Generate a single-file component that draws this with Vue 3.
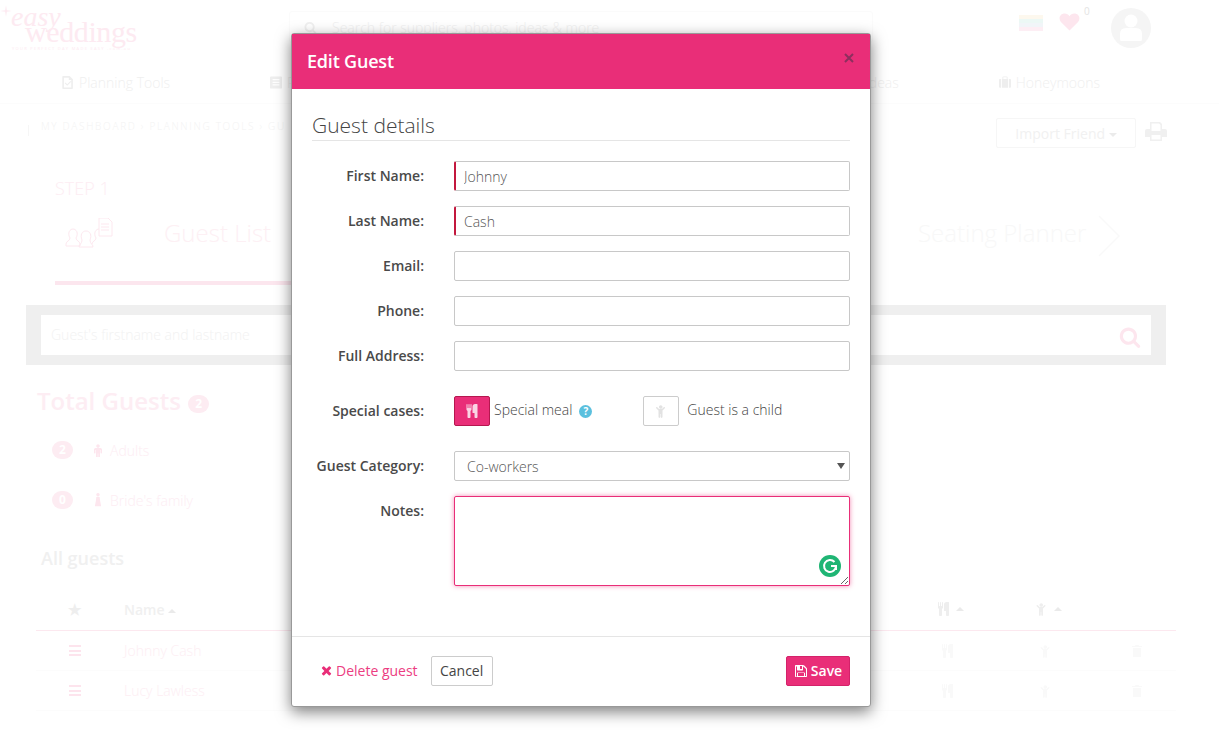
<script setup>
const d = {
  cutlery: 'M640 64v640q0 61-35.5 111t-92.5 70v779q0 52-38 90t-90 38h-128q-52 0-90-38t-38-90v-779q-57-20-92.5-70t-35.5-111v-640q0-26 19-45t45-19 45 19 19 45v416q0 26 19 45t45 19 45-19 19-45v-416q0-26 19-45t45-19 45 19 19 45v416q0 26 19 45t45 19 45-19 19-45v-416q0-26 19-45t45-19 45 19 19 45zm768 0v1600q0 52-38 90t-90 38h-128q-52 0-90-38t-38-90v-512h-224q-13 0-22.5-9.5t-9.5-22.5v-800q0-132 94-226t226-94h256q26 0 45 19t19 45z',
  child: 'M1188 548l-292 292v824q0 46-33 79t-79 33-79-33-33-79v-384h-64v384q0 46-33 79t-79 33-79-33-33-79v-824l-292-292q-28-28-28-68t28-68q29-28 68.5-28t67.5 28l228 228h368l228-228q28-28 68-28t68 28q28 29 28 68.5t-28 67.5zm-292-164q0 93-65.5 158.5t-158.5 65.5-158.5-65.5-65.5-158.5 65.5-158.5 158.5-65.5 158.5 65.5 65.5 158.5z',
  male: 'M1024 832v416q0 40-28 68t-68 28-68-28-28-68v-352h-64v912q0 46-33 79t-79 33-79-33-33-79v-464h-64v464q0 46-33 79t-79 33-79-33-33-79v-912h-64v352q0 40-28 68t-68 28-68-28-28-68v-416q0-80 56-136t136-56h640q80 0 136 56t56 136zm-288-448q0 93-65.5 158.5t-158.5 65.5-158.5-65.5-65.5-158.5 65.5-158.5 158.5-65.5 158.5 65.5 65.5 158.5z',
  times: 'M1298 1242q0 40-28 68l-136 136q-28 28-68 28t-68-28l-294-294-294 294q-28 28-68 28t-68-28l-136-136q-28-28-28-68t28-68l294-294-294-294q-28-28-28-68t28-68l136-136q28-28 68-28t68 28l294 294 294-294q28-28 68-28t68 28l136 136q28 28 28 68t-28 68l-294 294 294 294q28 28 28 68z',
  save: 'M512 1536h768v-384h-768v384zm896 0h128v-840q0-14-10-38.5t-20-34.5l-281-281q-10-10-34-20t-39-10v416q0 40-28 68t-68 28h-576q-40 0-68-28t-28-68v-416h-128v1280h128v-416q0-40 28-68t68-28h832q40 0 68 28t28 68v416zm-384-928v-320q0-13-9.5-22.5t-22.5-9.5h-192q-13 0-22.5 9.5t-9.5 22.5v320q0 13 9.5 22.5t22.5 9.5h192q13 0 22.5-9.5t9.5-22.5zm640 32v928q0 40-28 68t-68 28h-1344q-40 0-68-28t-28-68v-1344q0-40 28-68t68-28h928q40 0 88 20t76 48l280 280q28 28 48 76t20 88z',
  search: 'M1216 832q0-185-131.5-316.5t-316.5-131.5-316.5 131.5-131.5 316.5 131.5 316.5 316.5 131.5 316.5-131.5 131.5-316.5zm512 832q0 52-38 90t-90 38q-54 0-90-38l-343-342q-179 124-399 124-143 0-273.5-55.5t-225-150-150-225-55.5-273.5 55.5-273.5 150-225 225-150 273.5-55.5 273.5 55.5 225 150 150 225 55.5 273.5q0 220-124 399l343 343q37 37 37 90z'
}
const fields = [
  { label: 'First Name:', value: 'Johnny', required: true },
  { label: 'Last Name:', value: 'Cash', required: true },
  { label: 'Email:', value: '' },
  { label: 'Phone:', value: '' },
  { label: 'Full Address:', value: '' }
]
const guests = ['Johnny Cash', 'Lucy Lawless']
</script>

<template>
  <div class="page">
    <header class="top">
      <div class="logo">
        <svg class="logo-star" viewBox="0 0 14 14"><path d="M7 0l1 6 6 1-6 1-1 6-1-6-6-1 6-1z" /></svg>
        <span class="logo-easy">easy</span>
        <span class="logo-wed">weddings</span>
        <span class="logo-tag">YOUR PERFECT DAY MADE EASY .com.au</span>
      </div>
      <div class="top-search">
        <svg class="top-search-icon" viewBox="0 0 1792 1792"><path :d="d.search" /></svg>
        <span>Search for suppliers, photos, ideas &amp; more</span>
      </div>
      <div class="flag"><i></i><i></i><i></i><i></i></div>
      <svg class="heart" viewBox="0 0 22 18"><path d="M11 18L2 9C-1 5 1 0 6 0c2 0 4 1 5 3 1-2 3-3 5-3 5 0 7 5 4 9z" /></svg>
      <span class="heart-count">0</span>
      <div class="avatar">
        <svg viewBox="0 0 40 40"><circle cx="20" cy="13" r="6.5" /><path d="M10 33q-1 0-1-2v-5q0-6 6-6h10q6 0 6 6v5q0 2-1 2z" /></svg>
      </div>
    </header>

    <nav class="nav">
      <span class="nav-item">
        <svg viewBox="0 0 14 16"><path d="M1 0h8l4 4v11a1 1 0 0 1-1 1H1a1 1 0 0 1-1-1V1a1 1 0 0 1 1-1zm1 2v12h9V5H8V2zm1 7l1-1 2 2 4-4 1 1-5 5z" /></svg>
        Planning Tools
      </span>
      <span class="nav-item nav-second">
        <svg viewBox="0 0 14 14"><path d="M1 0h12a1 1 0 0 1 1 1v12a1 1 0 0 1-1 1H1a1 1 0 0 1-1-1V1a1 1 0 0 1 1-1zm2 3v1.500h8V3zm0 3v1.500h8V6zm0 3v1.500h8V9z" /></svg>
        Planner
      </span>
      <span class="nav-ideas">Photos &amp; Ideas</span>
      <span class="nav-item nav-last">
        <svg viewBox="0 0 14 14"><path d="M5 0h4a1 1 0 0 1 1 1v2h3a1 1 0 0 1 1 1v8a1 1 0 0 1-1 1H1a1 1 0 0 1-1-1V4a1 1 0 0 1 1-1h3V1a1 1 0 0 1 1-1zm0 1v2h4V1zM2.500 3v10h1V3zm8 0v10h1V3z" /></svg>
        Honeymoons
      </span>
    </nav>

    <div class="crumbs">
      <span class="crumb-mark"></span>
      <span class="crumb-text">MY DASHBOARD › PLANNING TOOLS › GU</span>
      <button class="import">Import Friend <i class="caret"></i></button>
      <svg class="printer" viewBox="0 0 22 19"><path d="M5 0h10l2 2v5h3a2 2 0 0 1 2 2v6h-5v4H5v-4H0V9a2 2 0 0 1 2-2h3zm1.500 1.500V9h9V3l-1.500-1.500zm0 11.500v4.500h9V13z" /></svg>
    </div>

    <section class="steps">
      <div class="step-label">STEP 1</div>
      <div class="tab-row">
        <svg class="tab-icon" viewBox="0 0 48 30">
          <g fill="none" stroke="#fde8ef" stroke-width="1">
            <path d="M1 26c0-3 4-3 4-6-3-5 0-9 3-9s6 4 3 9c0 3 4 3 4 6v2H1z" />
            <path d="M14 29c0-3 3-3 3-7-2-5 0-9 4-9s6 4 4 9c0 4 3 4 3 7z" />
            <path d="M27 26c0-3 4-3 4-6-3-5 0-9 3-9" />
            <path d="M34 0h9l4 4v14H34zM36 6h8M36 9h8M36 12h8" />
          </g>
        </svg>
        <span class="tab-guest">Guest List</span>
        <span class="tab-seat">Seating Planner</span>
        <svg class="tab-chevron" viewBox="0 0 22 42"><path d="M1 1l20 20-20 20" /></svg>
      </div>
      <div class="tab-line"></div>
    </section>

    <div class="band">
      <div class="band-input">
        <span>Guest's firstname and lastname</span>
        <svg viewBox="0 0 1792 1792"><path :d="d.search" /></svg>
      </div>
    </div>

    <h2 class="total">Total Guests <span class="badge badge-big">2</span></h2>

    <div class="stats">
      <div class="stat-col">
        <div class="stat">
          <span class="badge">2</span>
          <svg class="stat-icon" viewBox="0 0 1024 1792"><path :d="d.male" /></svg>
          <span>Adults</span>
        </div>
        <div class="stat">
          <span class="badge">0</span>
          <svg class="stat-icon" viewBox="0 0 1024 1792"><path d="M512 0a220 220 0 1 1-1 0zM300 500h424l60 500 130 700H110l130-700z" /></svg>
          <span>Bride's family</span>
        </div>
      </div>
      <div class="stat-col">
        <div class="stat">
          <span class="badge">0</span>
          <svg class="stat-icon wide" viewBox="0 0 1408 1792"><path :d="d.cutlery" /></svg>
          <span>Special meals</span>
        </div>
        <div class="stat">
          <span class="badge">0</span>
          <svg class="stat-icon wide" viewBox="0 0 11 14"><path fill-rule="evenodd" d="M0 0h11v14H0zM2 2v1h1V2zm3 0v1h1V2zm3 0v1h1V2zM2 5v1h1V5zm3 0v1h1V5zm3 0v1h1V5zM2 8v1h1V8zm3 0v1h1V8zm3 0v1h1V8zM4 11v3h3v-3z" /></svg>
          <span>Co-workers</span>
        </div>
      </div>
    </div>

    <h3 class="all">All guests</h3>

    <div class="table">
      <div class="row head">
        <span class="cell-star">★</span>
        <span>Name <i class="sort"></i></span>
        <span class="head-ic"><svg class="ic" viewBox="0 0 1408 1792"><path :d="d.cutlery" /></svg><i class="sort"></i></span>
        <span class="head-ic"><svg class="ic" viewBox="0 0 1408 1792"><path :d="d.child" /></svg><i class="sort"></i></span>
        <span></span>
      </div>
      <div v-for="g in guests" :key="g" class="row body-row">
        <span class="burger"><i></i><i></i><i></i></span>
        <span class="guest-name">{{ g }}</span>
        <span class="row-ic"><svg class="ic" viewBox="0 0 1408 1792"><path :d="d.cutlery" /></svg></span>
        <span class="row-ic"><svg class="ic" viewBox="0 0 1408 1792"><path :d="d.child" /></svg></span>
        <svg class="trash" viewBox="0 0 10 12"><path d="M3.500 0h3l.5 1h3v1H0V1h3zM1 3h8v9H1z" /></svg>
      </div>
    </div>

    <div class="modal">
      <div class="modal-head">
        <span>Edit Guest</span>
        <svg class="close" viewBox="0 0 12 12"><path d="M2 2l8 8M10 2l-8 8" /></svg>
      </div>
      <div class="modal-body">
        <h4 class="section">Guest details</h4>
        <div class="fields">
          <label v-for="f in fields" :key="f.label" class="field">
            <span class="lbl">{{ f.label }}</span>
            <input class="txt" :class="{ req: f.required }" type="text" :value="f.value" />
          </label>
        </div>
        <div class="field cases">
          <span class="lbl">Special cases:</span>
          <div class="case-list">
            <span class="toggle on"><svg viewBox="0 0 1408 1792"><path :d="d.cutlery" /></svg></span>
            <span class="case-text">Special meal</span>
            <span class="help">?</span>
            <span class="toggle off"><svg viewBox="0 0 1408 1792"><path :d="d.child" /></svg></span>
            <span class="case-text">Guest is a child</span>
          </div>
        </div>
        <label class="field category">
          <span class="lbl">Guest Category:</span>
          <span class="select-wrap">
            <select class="sel"><option>Co-workers</option></select>
            <i class="sel-arrow"></i>
          </span>
        </label>
        <label class="field notes">
          <span class="lbl">Notes:</span>
          <span class="area-wrap">
            <textarea class="area"></textarea>
            <span class="grammarly">
              <svg viewBox="0 0 22 22"><path d="M15.500 7A6 6 0 1 0 17 11h-5" fill="none" stroke="#fff" stroke-width="2" /><path d="M13 11h4v4" fill="none" stroke="#fff" stroke-width="2" /></svg>
            </span>
          </span>
        </label>
      </div>
      <div class="modal-foot">
        <a class="delete"><svg viewBox="0 0 1408 1792"><path :d="d.times" /></svg>Delete guest</a>
        <button class="cancel">Cancel</button>
        <button class="save"><svg viewBox="0 0 1792 1792"><path :d="d.save" /></svg>Save</button>
      </div>
    </div>
  </div>
</template>

<style scoped>
.page {
  position: relative;
  width: 1219px;
  height: 734px;
  overflow: hidden;
  background: #fff;
  font-family: "Open Sans", "Liberation Sans", sans-serif;
  font-size: 14px;
  color: #555;
}

/* Top bar */
.top { position: relative; display: flex; align-items: flex-start; height: 66px; }
.logo { position: relative; width: 289px; height: 66px; font-family: "Liberation Serif", serif; color: #fdeaf1; flex: none; }
.logo-star { position: absolute; left: 0; top: 5px; width: 12px; height: 12px; fill: #fdeaf1; }
.logo-easy { position: absolute; left: 11px; top: 0; font-style: italic; font-size: 28px; line-height: 34px; }
.logo-wed { position: absolute; left: 25px; top: 14px; font-size: 30px; line-height: 36px; letter-spacing: -0.4px; }
.logo-tag { position: absolute; left: 12px; top: 46px; font: 4px/6px "Open Sans", sans-serif; letter-spacing: 1.3px; white-space: nowrap; }
.top-search {
  display: flex; align-items: center; gap: 15px; width: 584px; height: 32px; margin-top: 11px;
  padding-left: 14px; box-sizing: border-box; border: 1px solid #fbfbfb; border-radius: 3px; color: #f1f1f1; font-size: 14px; font-weight: 300; flex: none;
}
.top-search-icon { width: 13px; height: 13px; fill: #f0f0f0; }
.flag { display: flex; flex-direction: column; width: 24px; height: 16px; margin: 15px 0 0 146px; flex: none; }
.flag i { flex: 1; }
.flag i:nth-child(1) { background: #fdf8ee; }
.flag i:nth-child(2) { background: #ecf8f5; }
.flag i:nth-child(3) { background: #f1f5f8; }
.flag i:nth-child(4) { background: #fdeef4; }
.heart { width: 21px; height: 18px; margin: 13px 0 0 16px; fill: #fde6ee; flex: none; }
.heart-count { font-size: 10px; color: #e4e4e4; margin: 4px 0 0 4px; width: 27px; flex: none; line-height: 14px; }
.avatar { width: 40px; height: 40px; margin-top: 8px; border-radius: 50%; background: #f5f5f5; flex: none; }
.avatar svg { display: block; fill: #fff; }

/* Main nav */
.nav { display: flex; align-items: center; height: 33px; padding: 0 119px 4px 62px; border-bottom: 1px solid #fcfcfc; color: #efefef; font-weight: 300; }
.nav-item { display: flex; align-items: center; gap: 5px; }
.nav-item svg { width: 12px; height: 13px; fill: #eeeeee; }
.nav-second { margin-left: 100px; }
.nav-ideas { margin-left: auto; }
.nav-last { margin-left: 100px; }

/* Breadcrumb */
.crumbs { display: flex; align-items: flex-start; height: 67px; box-sizing: border-box; padding: 14px 52px 0 28px; }
.crumb-mark { width: 1px; height: 11px; margin-top: 7px; background: #f6f6f6; }
.crumb-text { margin-left: 12px; font-size: 10px; font-weight: 300; line-height: 14px; margin-top: 1px; letter-spacing: 1.7px; color: #f3f3f3; white-space: nowrap; }
.import {
  margin-left: auto; width: 140px; height: 30px; background: #fff; border: 1px solid #f6f6f6; border-radius: 2px;
  color: #f1f1f1; font: 14px "Open Sans", sans-serif; padding: 0;
}
.caret { display: inline-block; border: 4px solid transparent; border-top-color: #ebebeb; border-bottom: 0; vertical-align: 2px; }
.printer { width: 22px; height: 19px; margin: 4px 0 0 9px; fill: #f0f0f0; }

/* Steps */
.steps { padding: 0 0 0 55px; height: 134px; }
.step-label { height: 32px; padding-top: 6px; box-sizing: border-box; font-size: 18px; line-height: 22px; font-weight: 300; color: #fdedf3; }
.tab-row { position: relative; display: flex; align-items: center; height: 59px; }
.tab-icon { width: 48px; height: 30px; margin: 0 0 0 10px; flex: none; }
.tab-guest { margin-left: 51px; font-size: 24px; font-weight: 300; color: #fdf0f4; width: 754px; flex: none; }
.tab-seat { font-size: 24px; font-weight: 300; color: #f8f8f8; white-space: nowrap; }
.tab-chevron { width: 22px; height: 42px; margin: 6px 0 0 12px; fill: none; stroke: #f9f9f9; stroke-width: 1.5; flex: none; }
.tab-line { width: 240px; height: 4px; margin-top: 19px; background: #fce6ee; }

/* Search band */
.band { width: 1140px; height: 60px; margin-left: 26px; padding: 10px 15px; box-sizing: border-box; background: #efefef; }
.band-input { display: flex; align-items: center; justify-content: space-between; height: 40px; padding: 0 10px; background: #fff; color: #f2f2f2; font-weight: 300; }
.band-input span { margin-top: -2px; }
.band-input svg { width: 22px; height: 22px; margin-top: 4px; fill: #fde6ee; }

/* Totals */
.total { margin: 19px 0 0 37px; font-size: 24px; line-height: 33px; font-weight: 600; color: #fdedf3; }
.badge {
  display: inline-block; width: 21px; height: 18px; border-radius: 10px; background: #fdecf2; color: #fff;
  font-size: 12px; font-weight: 700; line-height: 18px; text-align: center; flex: none;
}
.badge-big { vertical-align: 2px; margin-left: 1px; }
.stats { display: flex; padding-left: 52px; margin-top: 8px; }
.stat-col { width: 842px; }
.stat { display: flex; align-items: center; height: 50px; color: #fdedf3; font-size: 14px; font-weight: 300; }
.stat-icon { width: 10px; height: 14px; margin: 0 7px 0 20px; fill: #fde6ee; flex: none; }
.stat-icon.wide { width: 11px; margin: 0 8px 0 18px; }

.all { margin: 21px 0 0 41px; font-size: 18px; line-height: 25px; font-weight: 600; color: #f0f0f0; }

/* Table */
.table { margin: 20px 0 0 36px; width: 1140px; }
.row { display: grid; grid-template-columns: 88px 814px 98px 96px 44px; align-items: center; }
.head { height: 40px; padding-bottom: 3px; box-sizing: border-box; border-bottom: 1px solid #fce8ef; color: #f0f0f0; font-weight: 600; }
.cell-star { padding-left: 32px; font-size: 15px; color: #eeeeee; }
.sort { display: inline-block; border: 4px solid transparent; border-bottom-color: #eaeaea; border-top: 0; vertical-align: 2px; }
.head-ic { display: flex; align-items: center; gap: 7px; }
.ic { width: 11px; height: 14px; fill: #eeeeee; }
.body-row { height: 40px; border-bottom: 1px solid #fcfcfc; box-sizing: border-box; }
.burger { display: flex; flex-direction: column; gap: 2.500px; padding-left: 33px; }
.burger i { width: 12px; height: 2px; background: #fde4ed; }
.guest-name { color: #fdeef3; font-weight: 300; }
.row-ic { padding-left: 4px; display: flex; }
.row-ic .ic { fill: #f9f9f9; }
.trash { width: 10px; height: 12px; fill: #f9f9f9; }

/* Modal */
.modal {
  position: absolute; left: 291px; top: 33px; width: 580px; height: 674px; box-sizing: border-box;
  display: flex; flex-direction: column; background: #fff; border: 1px solid #999; border-radius: 3px;
  box-shadow: 0 5px 15px rgba(0, 0, 0, 0.5);
}
.modal-head {
  position: relative; display: flex; align-items: center; height: 55px; padding: 0 0 2px 15px; box-sizing: border-box; flex: none;
  background: #e92e78; color: #fff; font-size: 18px; font-weight: 600; letter-spacing: -0.2px;
}
.close { position: absolute; left: 551px; top: 18px; width: 12px; height: 12px; fill: none; stroke: #8d2f5e; stroke-width: 2; }
.modal-body { flex: 1; padding: 0 20px; }
.section { margin: 22px 0 20px; border-bottom: 1px solid #e5e5e5; font-size: 21px; line-height: 29px; font-weight: 300; color: #444; height: 29px; }
.field { display: grid; grid-template-columns: 112px 396px; column-gap: 30px; align-items: center; }
.fields { display: flex; flex-direction: column; gap: 15px; }
.lbl { text-align: right; font-weight: 600; font-size: 14px; color: #4a4a4a; padding-bottom: 2px; }
.txt, .sel {
  width: 396px; height: 30px; box-sizing: border-box; padding: 0 9px; border: 1px solid #c8c8c8; border-radius: 2px;
  background: #fff; font: 300 14px "Open Sans", sans-serif; color: #555; outline: 0;
}
.req { border-left: 2px solid #c3183e; padding-left: 8px; }
.cases { margin-top: 25px; }
.case-list { display: flex; align-items: center; height: 30px; }
.toggle { display: flex; align-items: center; justify-content: center; width: 36px; height: 30px; box-sizing: border-box; border-radius: 2px; flex: none; }
.toggle svg { width: 12px; height: 14px; }
.on { background: #e92e78; border: 1px solid #b5174f; }
.on svg { fill: #fff; opacity: 0.8; }
.off { margin-left: 51px; border: 1px solid #ccc; background: #fff; }
.off svg { fill: #e2e2e2; }
.case-text { margin-left: 4px; font-weight: 300; font-size: 14px; color: #444; white-space: nowrap; margin-top: -3px; }
.off + .case-text { margin-left: 8px; }
.help {
  display: inline-block; width: 13px; height: 13px; margin-left: 7px; border-radius: 50%; background: #5bc0de; color: #fff;
  font-size: 10px; font-weight: 700; line-height: 13px; text-align: center; flex: none;
}
.category { margin-top: 25px; }
.select-wrap { position: relative; display: block; height: 30px; }
.sel { display: block; appearance: none; padding-left: 12px; }
.sel-arrow { position: absolute; right: 5px; top: 12px; border: 4px solid transparent; border-top: 6px solid #555; border-bottom: 0; pointer-events: none; }
.notes { margin-top: 15px; align-items: start; }
.notes .lbl { padding-top: 5px; }
.area-wrap { position: relative; display: block; height: 90px; }
.area {
  display: block; width: 396px; height: 90px; box-sizing: border-box; border: 1px solid #e92e78; border-radius: 2px;
  box-shadow: 0 0 5px rgba(233, 46, 120, 0.55); outline: 0;
}
.grammarly { position: absolute; left: 365px; top: 59px; width: 22px; height: 22px; border-radius: 50%; background: #1fb574; }
.grammarly svg { display: block; }
.modal-foot {
  display: flex; align-items: center; height: 70px; flex: none; box-sizing: border-box; padding: 0 20px 2px 29px; border-top: 1px solid #e5e5e5;
}
.delete { display: flex; align-items: center; gap: 4px; color: #ec3d82; font-size: 14px; }
.delete svg { width: 11px; height: 14px; fill: #e92e78; }
.cancel {
  width: 62px; height: 30px; margin-left: 13px; padding: 0; background: #fff; border: 1px solid #ccc; border-radius: 2px;
  color: #444; font: 14px "Open Sans", sans-serif;
}
.save {
  display: flex; align-items: center; justify-content: center; gap: 3px; width: 64px; height: 30px; margin-left: auto; padding: 0;
  background: #e92e78; border: 1px solid #d4226a; border-radius: 2px; color: #fff; font: 600 14px "Open Sans", sans-serif;
}
.save svg { width: 14px; height: 14px; fill: #fff; }
</style>

<style>
html, body { margin: 0; overflow: hidden; }
</style>
